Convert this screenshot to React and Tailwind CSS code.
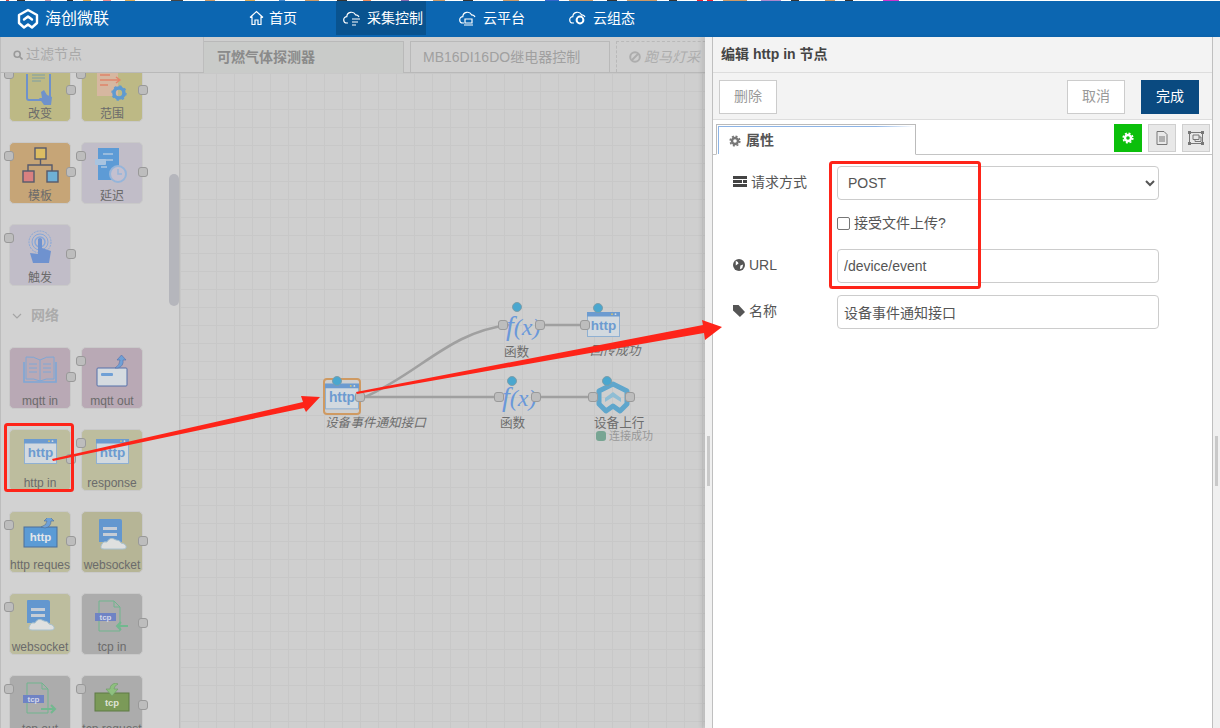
const FONT = 'font-["Liberation_Sans","Noto_Sans_CJK_SC",sans-serif]';

const STRIP = [
  ['#fff', 6], ['#c44', 3], ['#fff', 8], ['#333', 8], ['#fff', 20], ['#c9a', 6], ['#fff', 16], ['#333', 6], ['#fff', 10], ['#da5', 8], ['#fff', 12], ['#e88', 8], ['#fff', 14],
  ['#da5', 10], ['#fff', 36], ['#444', 12], ['#fff', 22], ['#c96', 10], ['#fff', 30], ['#da5', 10], ['#fff', 24], ['#48c', 6], ['#fff', 20], ['#c96', 14], ['#fff', 18],
  ['#333', 10], ['#fff', 16], ['#e85', 8], ['#fff', 30], ['#86a', 8], ['#fff', 24], ['#c96', 12], ['#fff', 18], ['#333', 10], ['#fff', 30], ['#c96', 16], ['#fff', 26],
  ['#36c', 14], ['#fff', 10], ['#c96', 24], ['#fff', 14], ['#333', 10], ['#fff', 10], ['#c96', 30], ['#fff', 12], ['#333', 8], ['#fff', 20], ['#e23', 6], ['#fff', 4], ['#e23', 6],
  ['#fff', 10], ['#c96', 24], ['#fff', 14], ['#a8c', 20], ['#fff', 10], ['#333', 8], ['#fff', 26], ['#c96', 10], ['#fff', 10], ['#333', 8], ['#fff', 30], ['#c3c', 16],
];

const Logo = () => (
  <svg width="22" height="22" viewBox="0 0 22 22" fill="none" stroke="#fff" strokeWidth="2.4" strokeLinejoin="round" strokeLinecap="round">
    <path d="M11 2 L20 7 V15 L15 19.5 L11 16.5 L7 19.5 L2 15 V7 Z" />
    <path d="M7 11.5 L11 8.5 L15 11.5" />
  </svg>
);

const HomeIcon = () => (
  <svg width="15" height="16" viewBox="0 0 15 16" fill="none" stroke="#fff" strokeWidth="1.2">
    <path d="M1 7.5 L7.5 1.5 L14 7.5 M3 6.5 V14.5 H6 V10 H9 V14.5 H12 V6.5" />
  </svg>
);

const CloudIcon = ({ children }) => (
  <svg width="19" height="16" viewBox="0 0 19 16" fill="none" stroke="#fff" strokeWidth="1.2">
    <path d="M5 13 H4 A3.2 3.2 0 0 1 3.8 6.6 A4.6 4.6 0 0 1 12.5 4.8 A3.4 3.4 0 0 1 16 7" />
    {children}
  </svg>
);

const NavItem = ({ icon, label, active }) => (
  <div className={`h-[34px] flex items-center gap-[5px] ${active ? 'bg-[#09538f] w-[90px] pl-[7px]' : ''}`}>
    {icon}
    <span className="text-[14px] text-white">{label}</span>
  </div>
);

const Header = () => (
  <div className="h-[36px] bg-[#0c66b1] flex items-start shrink-0">
    <div className="w-[249px] h-[36px] pl-[17px] flex items-center gap-[6px]">
      <Logo />
      <span className="text-[16px] text-white">海创微联</span>
    </div>
    <div className="w-[87px]">
      <NavItem icon={<HomeIcon />} label="首页" />
    </div>
    <NavItem
      active
      icon={<CloudIcon><path d="M9 9 H17 M9 12 H15 M9 15 H13" /></CloudIcon>}
      label="采集控制"
    />
    <div className="ml-[33px]">
      <NavItem icon={<CloudIcon><path d="M6 9 H13 V13 H6 Z M5 15 H14" /></CloudIcon>} label="云平台" />
    </div>
    <div className="ml-[44px]">
      <NavItem icon={<CloudIcon><circle cx="11" cy="10" r="3.4" strokeWidth="2" /></CloudIcon>} label="云组态" />
    </div>
  </div>
);

// palette / canvas icons
const HttpWindow = ({ w = 33, h = 25 }) => (
  <svg width={w} height={h} viewBox="0 0 33 25">
    <rect x="0.5" y="0.5" width="32" height="24" fill="#d2d9df" stroke="#8fb0d2" />
    <rect x="0" y="0" width="33" height="4.5" fill="#6c9bd0" />
    <circle cx="25" cy="2.2" r="0.9" fill="#d9c56b" />
    <circle cx="28.5" cy="2.2" r="0.9" fill="#d5dbe0" />
    <text x="16.5" y="17.5" textAnchor="middle" fontSize="13.5" fontWeight="700" fill="#6c9bd0" fontFamily="Liberation Sans">http</text>
  </svg>
);

const DocCloud = () => (
  <svg width="31" height="34" viewBox="0 0 31 34">
    <path d="M2 2 Q2 1 3 1 H23 Q25 1 25 3 V24 H2 Z" fill="#6397cf" />
    <rect x="6" y="9" width="14" height="3" fill="#c6cdd6" />
    <rect x="6" y="15" width="14" height="3" fill="#c6cdd6" />
    <path d="M7 31 Q2 31 5 26 Q6 23 10 24 Q13 18 19 22 Q23 22 24 25 Q30 26 29 30 Q28 31 26 31 Z" fill="#dfe0df" stroke="#a9c2cf" />
  </svg>
);

const TcpDoc = ({ arrowIn }) => (
  <svg width="34" height="32" viewBox="0 0 34 32" fill="none">
    <path d="M4 1 H19 L25 7 V31 H4 Z M19 1 V7 H25" stroke="#70b58e" />
    <rect x="0" y="13" width="21" height="8" fill="#6f83c4" />
    <text x="10.5" y="20" textAnchor="middle" fontSize="8" fontWeight="700" fill="#d5d8e8" fontFamily="Liberation Sans">tcp</text>
    <path d={arrowIn ? 'M33 26 H22 M26 22 L22 26 L26 30' : 'M18 27 H32 M28 23 L32 27 L28 31'} stroke="#72b88f" strokeWidth="2" />
  </svg>
);

const icons = {
  change: (
    <svg width="28" height="34" viewBox="0 0 28 34" fill="none">
      <rect x="1" y="-8" width="23" height="34" rx="2" stroke="#6f92cb" strokeWidth="2" />
      <path d="M6 1 H19 M6 4 H19 M6 7 H15" stroke="#7c9ea5" />
      <path d="M15 18 L18 16 L21 21 L26 23 L25 31 H18 L13 24 L16 24 Z" fill="#6f92cb" />
    </svg>
  ),
  range: (
    <svg width="32" height="34" viewBox="0 0 32 34" fill="none">
      <rect x="1" y="-6" width="21" height="30" fill="#d6b7a0" />
      <path d="M4 3 H14 M4 8 H19 M4 13 H12" stroke="#e0856a" strokeWidth="1.6" />
      <path d="M19 8 H23 M20 5 L24 8 L20 11" stroke="#e0856a" strokeWidth="1.4" />
      <circle cx="23" cy="21" r="5" stroke="#5f9ad0" strokeWidth="3.6" />
      <circle cx="23" cy="21" r="7" stroke="#5f9ad0" strokeWidth="1.4" strokeDasharray="2.5 3" />
    </svg>
  ),
  template: (
    <svg width="37" height="36" viewBox="0 0 37 36" fill="none" stroke="#565a6c" strokeWidth="1.4">
      <rect x="13" y="1" width="11" height="11" fill="#dcbd62" />
      <path d="M18.5 12 V18 M6 24 V18 H30 V24" />
      <rect x="1" y="24" width="11" height="11" fill="#d98080" />
      <rect x="25" y="24" width="11" height="11" fill="#6fb0d6" />
    </svg>
  ),
  delay: (
    <svg width="34" height="36" viewBox="0 0 34 36" fill="none">
      <path d="M3 1 H24 V33 H3 Z" fill="#5d9bd6" />
      <path d="M8 7 H18 M6 13 H18 M6 20 H12" stroke="#d5dce5" />
      <rect x="0" y="12" width="11" height="6" rx="1" fill="#a9c4e0" />
      <circle cx="23" cy="27" r="8" fill="#c4c0cf" stroke="#95b5da" strokeWidth="2" />
      <path d="M23 22 V27 H27" stroke="#95b5da" strokeWidth="1.5" />
    </svg>
  ),
  trigger: (
    <svg width="26" height="34" viewBox="0 0 26 34" fill="none">
      <circle cx="13" cy="12" r="11" stroke="#85a7da" strokeDasharray="2 1" />
      <circle cx="13" cy="12" r="8" stroke="#85a7da" />
      <circle cx="13" cy="12" r="5" stroke="#85a7da" strokeWidth="1.5" />
      <path d="M11 9 Q13 7 15 9 V18 L24 21 L22 33 H6 L3 23 L11 24 Z" fill="#6f92cf" />
    </svg>
  ),
  book: (
    <svg width="34" height="28" viewBox="0 0 34 28" fill="none" stroke="#7ea7d6">
      <path d="M17 4 Q11 0 3 1 V23 Q11 22 17 25 Q23 22 31 23 V1 Q23 0 17 4 V25" />
      <path d="M6 8 H14 M6 12 H14 M6 16 H14 M20 8 H28 M20 12 H28 M20 16 H28" />
      <path d="M1 6 V26 H33 V6" strokeWidth="1.6" />
    </svg>
  ),
  mqttOut: (
    <svg width="32" height="32" viewBox="0 0 32 32" fill="none">
      <rect x="1" y="13" width="30" height="18" rx="1" fill="#d5dbe0" stroke="#5570aa" />
      <rect x="5" y="18" width="12" height="3" rx="1" fill="#6fa0d6" />
      <path d="M19 13 Q24 10 24 5 H21 L25.5 0 L30 5 H27 Q28 11 22 13 Z" fill="#6fa0d6" stroke="#5570aa" strokeWidth="0.6" />
    </svg>
  ),
  httpReq: (
    <svg width="35" height="30" viewBox="0 0 35 30">
      <rect x="1" y="9" width="33" height="20" fill="#5b9bd5" stroke="#4d6f99" />
      <path d="M18 9 Q24 7 24 3 H21 L26 -2 L31 3 H28 Q28 9 22 10 Z" fill="#6fa0d6" stroke="#4d6f99" strokeWidth="0.6" />
      <text x="17.5" y="23" textAnchor="middle" fontSize="11.5" fontWeight="700" fill="#e3e6ea" fontFamily="Liberation Sans">http</text>
    </svg>
  ),
  tcpReq: (
    <svg width="36" height="30" viewBox="0 0 36 30">
      <rect x="1" y="10" width="34" height="18" fill="#7b9a58" stroke="#5f7a45" />
      <path d="M22 0 Q16 1 16 6 H12 L18 13 L24 6 H20 Q20 3 24 1 Z" fill="#8ec07e" stroke="#6c9b63" strokeWidth="0.6" />
      <text x="18" y="23" textAnchor="middle" fontSize="9.5" fontWeight="700" fill="#dfe3d6" fontFamily="Liberation Sans">tcp</text>
    </svg>
  ),
};

const Port = ({ className }) => (
  <span className={`absolute w-[10px] h-[10px] rounded-[3px] bg-[#bdbdbd] border border-[#999] ${className}`} />
);

const PaletteNode = ({ label, color, icon, input = true, output = true, iconClass = 'top-[9px]' }) => (
  <div className={`relative w-[62px] h-[62px] rounded-[5px] border border-[#c9c9c9] ${color}`}>
    <div className={`absolute left-0 right-0 flex justify-center ${iconClass}`}>{icon}</div>
    <span className="absolute left-[-4px] right-[-4px] bottom-[-1px] text-center text-[12px] leading-[16px] text-[#6b6b6b] whitespace-nowrap overflow-hidden">{label}</span>
    {input && <Port className="left-[-6px] top-[8px]" />}
    {output && <Port className="right-[-6px] top-[24px]" />}
  </div>
);

const Palette = () => (
  <div className="relative w-[180px] shrink-0 border-r border-l border-[#bdbdbd] overflow-hidden pl-[8px]">
    <div className="mt-[-13px] grid grid-cols-[62px_62px] gap-x-[10px] gap-y-[20px] content-start">
      <PaletteNode label="改变" color="bg-[#bdb985]" icon={icons.change} iconClass="top-[13px]" />
      <PaletteNode label="范围" color="bg-[#bdb985]" icon={icons.range} iconClass="top-[11px]" />
      <PaletteNode label="模板" color="bg-[#c6a577]" icon={icons.template} iconClass="top-[4px]" />
      <PaletteNode label="延迟" color="bg-[#c1bdc8]" icon={icons.delay} iconClass="top-[4px]" />
      <PaletteNode label="触发" color="bg-[#c1bdc8]" icon={icons.trigger} iconClass="top-[5px]" />
      <div />
      <div className="col-span-2 h-[23px] mt-[-2px] flex items-center gap-[9px] pl-[3px]">
        <svg width="10" height="6" viewBox="0 0 10 6" fill="none" stroke="#a5a5a5" strokeWidth="1.2">
          <path d="M1 1 L5 5 L9 1" />
        </svg>
        <span className="text-[14px] font-bold text-[#ababab]">网络</span>
      </div>
      <PaletteNode label="mqtt in" color="bg-[#b9a9b5]" icon={icons.book} iconClass="top-[8px]" input={false} />
      <PaletteNode label="mqtt out" color="bg-[#b9a9b5]" icon={icons.mqttOut} iconClass="top-[7px]" output={false} />
      <PaletteNode label="http in" color="bg-[#bdbd9e]" icon={<HttpWindow />} input={false} />
      <PaletteNode label="response" color="bg-[#bdbd9e]" icon={<HttpWindow />} output={false} />
      <PaletteNode label="http reques" color="bg-[#bdbd9e]" icon={icons.httpReq} iconClass="top-[6px]" />
      <PaletteNode label="websocket" color="bg-[#b6b596]" icon={<DocCloud />} iconClass="top-[6px]" input={false} />
      <PaletteNode label="websocket" color="bg-[#bdbd9e]" icon={<DocCloud />} iconClass="top-[5px]" output={false} />
      <PaletteNode label="tcp in" color="bg-[#acacac]" icon={<TcpDoc arrowIn />} iconClass="top-[6px]" input={false} />
      <PaletteNode label="tcp out" color="bg-[#acacac]" icon={<TcpDoc />} iconClass="top-[6px]" output={false} />
      <PaletteNode label="tcp request" color="bg-[#acacac]" icon={icons.tcpReq} iconClass="top-[7px]" />
    </div>
    <div className="absolute top-[101px] left-[168px] w-[10px] h-[132px] rounded-full bg-[#b5b6bc]" />
  </div>
);

const FuncIcon = () => (
  <span className="font-['Liberation_Serif',serif] italic text-[24px] leading-[30px] text-[#6a98da] whitespace-nowrap">
    <span className="text-[28px]">f</span>(x)
  </span>
);

const BlueDot = ({ className }) => (
  <span className={`absolute w-[10px] h-[10px] rounded-full bg-[#4aa7cf] border border-[#7d9eaa] ${className}`} />
);

const NodeLabel = ({ x, y, italic, children }) => (
  <span className={`absolute text-[12.6px] leading-[16px] text-[#6d6d6d] whitespace-nowrap ${italic ? 'italic' : ''}`} style={{ left: x, top: y }}>
    {children}
  </span>
);

const CanvasPort = ({ x, y }) => (
  <span className="absolute w-[10px] h-[10px] rounded-[3px] bg-[#bdbdbd] border border-[#9a9a9a]" style={{ left: x, top: y }} />
);

// node positions are relative to the canvas (origin 180,73)
const Flow = () => (
  <div className="relative flex-1 overflow-hidden bg-[#cfcfcf] bg-[linear-gradient(#c8c8c8_1px,transparent_1px),linear-gradient(90deg,#c8c8c8_1px,transparent_1px)] bg-[size:18px_18px]">
    <svg className="absolute left-0 top-0" width="540" height="400" fill="none" stroke="#a0a0a0" strokeWidth="2.6">
      <path d="M185 324 C 240 300, 270 258, 330 252" />
      <path d="M185 324 H320" />
      <path d="M362 252 H402" />
      <path d="M360 324 H418" />
    </svg>

    <div className="absolute left-[143px] top-[305px] w-[38px] h-[37px] rounded-[4px] border-2 border-[#cf9a62] bg-[#cfcfcf] flex items-center justify-center">
      <HttpWindow w={34} h={27} />
    </div>
    <BlueDot className="left-[152px] top-[303px]" />
    <CanvasPort x={175} y={319} />
    <NodeLabel x={145} y={342} italic>设备事件通知接口</NodeLabel>

    <div className="absolute left-[326px] top-[238px]"><FuncIcon /></div>
    <BlueDot className="left-[332px] top-[229px]" />
    <CanvasPort x={318} y={247} />
    <CanvasPort x={355} y={247} />
    <NodeLabel x={324} y={271}>函数</NodeLabel>

    <div className="absolute left-[407px] top-[238px]"><HttpWindow w={33} h={27} /></div>
    <BlueDot className="left-[413px] top-[230px]" />
    <CanvasPort x={400} y={247} />
    <NodeLabel x={410} y={270} italic>回传成功</NodeLabel>

    <div className="absolute left-[322px] top-[309px]"><FuncIcon /></div>
    <BlueDot className="left-[327px] top-[303px]" />
    <CanvasPort x={314} y={319} />
    <CanvasPort x={351} y={319} />
    <NodeLabel x={320} y={342}>函数</NodeLabel>

    <svg className="absolute left-[414px] top-[308px]" width="38" height="34" viewBox="0 0 38 34" fill="none" strokeLinejoin="round">
      <path d="M19 3 L33 10 V23 L26 30 L19 25 L12 30 L5 23 V10 Z" stroke="#5fa6cc" strokeWidth="5" />
      <path d="M11 17 L19 11 L27 17 V21 L19 16 L11 21 Z" fill="#8fbdd4" />
    </svg>
    <BlueDot className="left-[422px] top-[303px]" />
    <CanvasPort x={408} y={319} />
    <CanvasPort x={445} y={319} />
    <NodeLabel x={414} y={342}>设备上行</NodeLabel>
    <span className="absolute left-[416px] top-[358px] w-[10px] h-[10px] rounded-[3px] bg-[#78a593]" />
    <span className="absolute left-[429px] top-[356px] text-[11px] leading-[14px] text-[#989898] whitespace-nowrap">连接成功</span>
  </div>
);

const TopBar = () => (
  <div className="h-[36px] shrink-0 flex items-end border-b border-[#b9b9b9] bg-[#cfcfcf]">
    <div className="w-[204px] h-full shrink-0 flex items-center pl-[12px] gap-[3px] border-l border-r border-[#bdbdbd]">
      <svg width="10" height="10" viewBox="0 0 10 10" fill="none" stroke="#999" strokeWidth="1.6">
        <circle cx="4.2" cy="4.2" r="3" />
        <path d="M6.5 6.5 L9.5 9.5" />
      </svg>
      <span className="text-[14px] text-[#a9a9a9]">过滤节点</span>
    </div>
    <div className="w-[200px] h-[32px] mb-[-1px] border-r border-t border-[#b9b9b9] bg-[#c9cbc9] flex items-center pl-[13px] text-[14px] font-bold text-[#8a8a8a]">可燃气体探测器</div>
    <div className="ml-[6px] w-[200px] h-[31px] border border-[#b9b9b9] border-b-0 flex items-center pl-[12px] text-[14px] text-[#a0a0a0] whitespace-nowrap">MB16DI16DO继电器控制</div>
    <div className="ml-[6px] w-[100px] h-[31px] border border-dashed border-[#b9b9b9] border-b-0 flex items-center pl-[12px] gap-[3px] text-[14px] italic text-[#adadad] whitespace-nowrap">
      <svg className="shrink-0" width="12" height="12" viewBox="0 0 12 12" fill="none" stroke="#adadad" strokeWidth="2">
        <circle cx="6" cy="6" r="4.8" />
        <path d="M3 9 L9 3" />
      </svg>
      跑马灯采
    </div>
  </div>
);

function GearIcon({ color }) {
  return (
    <svg width="12" height="12" viewBox="0 0 12 12" fill="none" stroke={color}>
      <circle cx="6" cy="6" r="3" strokeWidth="2.4" />
      <circle cx="6" cy="6" r="4.8" strokeWidth="1.6" strokeDasharray="2 1.77" />
    </svg>
  );
}

const FormRow = ({ icon, label, children, className = '' }) => (
  <div className={`flex ${className}`}>
    <div className="w-[124px] pl-[20px] pt-[7px] flex items-start gap-[4px] text-[14px] leading-[18px] text-[#555]">
      <span className="mt-[3px]">{icon}</span>
      {label}
    </div>
    {children}
  </div>
);

const inputClass = 'w-[322px] h-[34px] border border-[#cccccc] rounded-[4px] bg-white text-[14px] text-[#555] outline-none';

const Handle = () => (
  <div className="w-[3px] h-[50px] bg-[#c9c9c9]" />
);

const EditPanel = () => (
  <div className="absolute left-[705px] top-[37px] right-0 bottom-0 flex shadow-[-4px_0_4px_rgba(0,0,0,0.08)]">
    <div className="w-[7px] bg-[#f0f0f0] flex justify-center pt-[399px]"><Handle /></div>
    <div className="w-[501px] bg-white border-x border-[#bfbfbf] flex flex-col">
      <div className="h-[36px] shrink-0 bg-[#f3f3f3] border-b border-[#dddddd] flex items-center pl-[8px] text-[14px] font-bold text-[#444]">
        编辑 http in 节点
      </div>
      <div className="h-[47px] shrink-0 bg-[#f3f3f3] border-b border-[#dddddd] flex items-center justify-between pl-[6px] pr-[13px] pt-[1px]">
        <button className="w-[58px] h-[34px] bg-white border border-[#cccccc] text-[14px] text-[#999]">删除</button>
        <div className="flex items-center gap-[16px]">
          <button className="w-[58px] h-[34px] bg-white border border-[#cccccc] text-[14px] text-[#999]">取消</button>
          <button className="w-[58px] h-[34px] bg-[#0a4a80] text-[14px] text-white">完成</button>
        </div>
      </div>
      <div className="h-[35px] shrink-0 border-b border-[#c4c4c4] flex items-end justify-between pl-[3px] pr-[2px]">
        <div className="w-[200px] h-[31px] mb-[-1px] bg-white border border-[#bbbbbb] border-b-white pl-[1px] pt-[1px] flex flex-col">
          <div className="h-px bg-gradient-to-r from-[#8db4e6] from-80% to-white" />
          <div className="flex-1 border-l border-[#8db4e6] flex items-center gap-[5px] pl-[10px] text-[14px] font-bold text-[#555]">
            <GearIcon color="#777" />
            属性
          </div>
        </div>
        <div className="flex gap-[6px] self-start mt-[4px]">
          <div className="w-[28px] h-[28px] bg-[#0bbf0b] flex items-center justify-center"><GearIcon color="#fff" /></div>
          <div className="w-[28px] h-[28px] bg-[#e8e8e8] border border-[#cfcfcf] flex items-center justify-center">
            <svg width="12" height="14" viewBox="0 0 12 14" fill="none" stroke="#777">
              <path d="M1 .5 H8 L11 3.5 V13.5 H1 Z M3 6 H9 M3 8 H9 M3 10 H9" />
            </svg>
          </div>
          <div className="w-[28px] h-[28px] bg-[#e8e8e8] border border-[#cfcfcf] flex items-center justify-center">
            <svg width="16" height="14" viewBox="0 0 16 14" fill="none" stroke="#777">
              <path d="M1.5 1.5 H14.5 V12.5 H1.5 Z" />
              <path d="M5 4 H11 V8.5 H5 Z M7 8.5 V10.5 H13 V6 H11" />
              <rect x="0.5" y="0.5" width="2" height="2" fill="#777" />
              <rect x="13.5" y="0.5" width="2" height="2" fill="#777" />
              <rect x="0.5" y="11.5" width="2" height="2" fill="#777" />
              <rect x="13.5" y="11.5" width="2" height="2" fill="#777" />
            </svg>
          </div>
        </div>
      </div>
      <div className="pt-[11px] flex flex-col">
        <FormRow
          label="请求方式"
          icon={
            <svg width="14" height="11" viewBox="0 0 14 11" fill="#444">
              <rect width="14" height="3" />
              <rect y="4" width="9" height="3" />
              <rect x="10" y="4" width="4" height="3" />
              <rect y="8" width="14" height="3" />
            </svg>
          }
        >
          <select defaultValue="POST" className={`${inputClass} pl-[6px]`}>
            <option>POST</option>
          </select>
        </FormRow>
        <label className="ml-[124px] mt-[14px] h-[18px] flex items-center gap-[4px] text-[14px] text-[#555]">
          <span className="w-[13px] h-[13px] rounded-[2px] border border-[#767676] bg-white" />
          接受文件上传?
        </label>
        <FormRow
          className="mt-[17px]"
          label="URL"
          icon={
            <svg width="12" height="12" viewBox="0 0 13 13">
              <circle cx="6.5" cy="6.5" r="6.5" fill="#555" />
              <path d="M3 2 Q6 3 6 5 L3 7 Z M8 7 L11 6 L10 10 L7.5 11 Z" fill="#fff" />
            </svg>
          }
        >
          <input readOnly value="/device/event" className={`${inputClass} px-[6px]`} />
        </FormRow>
        <FormRow
          className="mt-[12px]"
          label="名称"
          icon={
            <svg width="12" height="12" viewBox="0 0 13 13" fill="#555">
              <path d="M0 0 H6 L13 7.5 L7.5 13 L0 6 Z" />
            </svg>
          }
        >
          <input readOnly value="设备事件通知接口" className={`${inputClass} px-[6px]`} />
        </FormRow>
      </div>
    </div>
    <div className="flex-1 bg-[#f0f0f0] flex justify-center pt-[399px]"><Handle /></div>
  </div>
);

// the red marks drawn over the screenshot
const Annotations = () => (
  <svg className="absolute left-0 top-0 pointer-events-none" width="1220" height="728" fill="none">
    <rect x="5.5" y="424.5" width="67" height="66" rx="2" stroke="#fe2419" strokeWidth="3" />
    <rect x="830.5" y="162.5" width="149" height="125" rx="2" stroke="#fe2419" strokeWidth="3" />
    <path d="M52 459 L303 402 L301 396 L320 397 L306 412 L304 408 L53 461 Z" fill="#fe2419" />
    <path d="M356 392 L703 325 L702 320 L722 327 L705 340 L704 333 L357 394 Z" fill="#fe2419" />
  </svg>
);

export default function App() {
  return (
    <div className={`relative w-[1220px] h-[728px] overflow-hidden bg-[#d2d2d2] flex flex-col ${FONT}`}>
      <div className="h-px shrink-0 flex bg-white">
        {STRIP.map(([c, w], i) => (
          <span key={i} className="h-px shrink-0" style={{ width: w, background: c }} />
        ))}
      </div>
      <Header />
      <TopBar />
      <div className="flex-1 flex min-h-0">
        <Palette />
        <Flow />
      </div>
      <EditPanel />
      <Annotations />
    </div>
  );
}
